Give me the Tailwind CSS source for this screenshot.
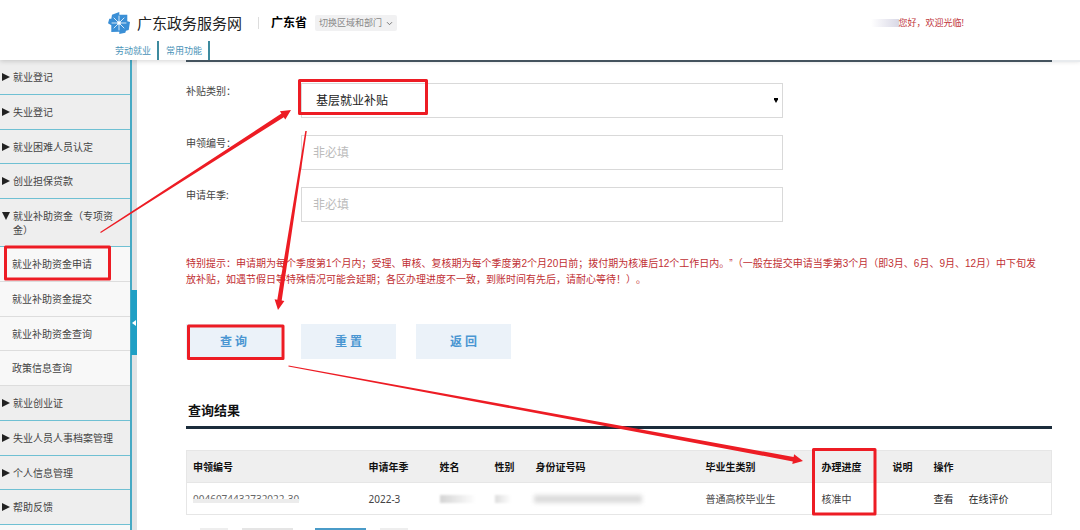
<!DOCTYPE html>
<html lang="zh-CN">
<head>
<meta charset="utf-8">
<meta name="viewport" content="width=device-width, initial-scale=1">
<title>广东政务服务网</title>
<script src="https://cdn.jsdelivr.net/npm/@tailwindcss/browser@4"></script>
</head>
<body class="relative flex h-screen flex-col overflow-hidden bg-white font-['Noto_Sans','Noto_Sans_CJK_SC',sans-serif] text-[10px] leading-4 text-[#444]">

<header class="relative z-10 flex h-[60px] shrink-0 flex-col justify-between bg-white pr-[116px] pl-[108px] shadow-[0_1px_5px_rgba(0,0,0,0.18)]">
  <div class="flex items-center pt-3">
    <svg class="size-[22px]" viewBox="0 0 22 22" aria-hidden="true">
      <path fill="#3a8fd6" d="M4 2.700L11.300 0V2.700H19.300V9.300L22 10L20.700 18L18 18.700L17.300 20.700L11.300 22V19.700L3.300 20V13.300L0 11.300L1.300 6.700H3.300z"/>
      <path stroke="#fff" stroke-width="0.8" stroke-linecap="round" d="M11 11V4M11 11V18M11 11H4M11 11H18M11 11L6 6M11 11L16 6M11 11L6 16M11 11L16 16"/>
      <circle cx="11" cy="11" r="1.800" fill="#fff"/>
    </svg>
    <span class="ml-[7px] text-[15px] leading-[22px] text-[#222]">广东政务服务网</span>
    <span class="ml-4 h-3 w-px bg-[#ddd]"></span>
    <strong class="ml-3 text-[12px] font-bold text-black">广东省</strong>
    <button type="button" class="ml-2 flex h-4 items-center gap-1 rounded-xs bg-[#f1f1f2] px-1 text-[9px] text-[#888]">切换区域和部门
      <svg class="size-[7px]" viewBox="0 0 7 7" fill="none" stroke="#777" aria-hidden="true"><path d="M1 2.200L3.500 4.700L6 2.200"/></svg>
    </button>
    <p class="ml-auto flex items-center text-[9px] text-[#c0353b]"><span class="h-2 w-7 bg-linear-to-r from-white to-[#d9d8e6]"></span>您好，欢迎光临!</p>
  </div>
  <nav class="flex h-[19px] text-[9px] text-[#4a93b8]">
    <a href="#" class="border-r-2 border-[#3d8a9e] pr-1.5 pl-[7px] leading-[19px]">劳动就业</a>
    <a href="#" class="border-r-2 border-[#3d8a9e] pr-1.5 pl-[7px] leading-[19px]">常用功能</a>
  </nav>
</header>

<div class="flex min-h-0 flex-1">
  <aside class="flex shrink-0">
    <ul class="w-[132px] border-r-2 border-[#45a9c4] bg-[#f8f8f8]">
      <li class="flex h-[35px] items-center border-b border-[#6fc0d3] bg-[#eee] pl-0.5"><a href="#" class="flex items-center gap-[3px]"><svg class="size-2" viewBox="0 0 8 8" fill="#222" aria-hidden="true"><path d="M0 0L8 4L0 8z"/></svg>就业登记</a></li>
      <li class="flex h-[35px] items-center border-b border-[#6fc0d3] bg-[#eee] pl-0.5"><a href="#" class="flex items-center gap-[3px]"><svg class="size-2" viewBox="0 0 8 8" fill="#222" aria-hidden="true"><path d="M0 0L8 4L0 8z"/></svg>失业登记</a></li>
      <li class="flex h-[34px] items-center border-b border-[#6fc0d3] bg-[#eee] pl-0.5"><a href="#" class="flex items-center gap-[3px]"><svg class="size-2" viewBox="0 0 8 8" fill="#222" aria-hidden="true"><path d="M0 0L8 4L0 8z"/></svg>就业困难人员认定</a></li>
      <li class="flex h-[35px] items-center border-b border-[#6fc0d3] bg-[#eee] pl-0.5"><a href="#" class="flex items-center gap-[3px]"><svg class="size-2" viewBox="0 0 8 8" fill="#222" aria-hidden="true"><path d="M0 0L8 4L0 8z"/></svg>创业担保贷款</a></li>
      <li>
        <a href="#" class="flex h-12 gap-[3px] border-b border-[#6fc0d3] bg-[#eee] pt-2.5 pr-3 pl-0.5 leading-[14px]"><svg class="mt-[3px] size-2 shrink-0" viewBox="0 0 8 8" fill="#222" aria-hidden="true"><path d="M0 0H8L4 8z"/></svg><span>就业补助资金（专项资金）</span></a>
        <ul>
          <li class="flex h-[35px] items-center border-b border-[#ddd] pl-3"><a href="#">就业补助资金申请</a></li>
          <li class="flex h-[35px] items-center border-b border-[#ddd] pl-3"><a href="#">就业补助资金提交</a></li>
          <li class="flex h-[34px] items-center border-b border-[#ddd] pl-3"><a href="#">就业补助资金查询</a></li>
          <li class="flex h-[35px] items-center border-b border-[#ddd] pl-3"><a href="#">政策信息查询</a></li>
        </ul>
      </li>
      <li class="flex h-[35px] items-center border-b border-[#6fc0d3] bg-[#eee] pl-0.5"><a href="#" class="flex items-center gap-[3px]"><svg class="size-2" viewBox="0 0 8 8" fill="#222" aria-hidden="true"><path d="M0 0L8 4L0 8z"/></svg>就业创业证</a></li>
      <li class="flex h-[35px] items-center border-b border-[#6fc0d3] bg-[#eee] pl-0.5"><a href="#" class="flex items-center gap-[3px]"><svg class="size-2" viewBox="0 0 8 8" fill="#222" aria-hidden="true"><path d="M0 0L8 4L0 8z"/></svg>失业人员人事档案管理</a></li>
      <li class="flex h-[34px] items-center border-b border-[#6fc0d3] bg-[#eee] pl-0.5"><a href="#" class="flex items-center gap-[3px]"><svg class="size-2" viewBox="0 0 8 8" fill="#222" aria-hidden="true"><path d="M0 0L8 4L0 8z"/></svg>个人信息管理</a></li>
      <li class="flex h-[35px] items-center border-b border-[#6fc0d3] bg-[#eee] pl-0.5"><a href="#" class="flex items-center gap-[3px]"><svg class="size-2" viewBox="0 0 8 8" fill="#222" aria-hidden="true"><path d="M0 0L8 4L0 8z"/></svg>帮助反馈</a></li>
    </ul>
    <div class="flex w-[5px] flex-col bg-[#e2e3e5] pt-[230px]">
      <button type="button" aria-label="收起菜单" class="-ml-px flex h-[65px] w-1.5 items-center justify-center bg-[#1f9fc4]"><svg class="h-1.5 w-1" viewBox="0 0 4 6" fill="#fff" aria-hidden="true"><path d="M4 0V6L0 3z"/></svg></button>
    </div>
  </aside>

  <main class="relative z-20 min-w-0 flex-1 pr-7 pl-[49px]">
    <div class="-mr-7 flex h-0.5 bg-[#e8ebee]"><div class="mr-7 flex-1 bg-[#44535e]"></div></div>
    <form class="pt-[21px]">
      <div class="flex flex-col gap-[17px]">
        <div class="flex">
          <label for="type" class="w-[115px] shrink-0">补贴类别：</label>
          <div class="relative w-[482px]">
            <select id="type" class="h-[35px] w-full appearance-none border border-[#d9d9d9] bg-white pl-3.5 text-[12px] text-[#222]"><option>基层就业补贴</option></select>
            <svg class="pointer-events-none absolute top-[15px] right-[5px] h-[5px] w-1" viewBox="0 0 4 5" fill="#000" aria-hidden="true"><path d="M0 0H4V1.500L2 5L0 1.500z"/></svg>
          </div>
        </div>
        <div class="flex">
          <label for="number" class="w-[115px] shrink-0">申领编号：</label>
          <input id="number" type="text" placeholder="非必填" class="h-[35px] w-[482px] border border-[#d9d9d9] px-[11px] text-[12px] placeholder:text-[#bbb]">
        </div>
        <div class="flex">
          <label for="season" class="w-[115px] shrink-0">申请年季:</label>
          <input id="season" type="text" placeholder="非必填" class="h-[35px] w-[482px] border border-[#d9d9d9] px-[11px] text-[12px] placeholder:text-[#bbb]">
        </div>
      </div>
      <p class="mt-[34px] font-['Liberation_Sans','Noto_Sans_CJK_SC',sans-serif] text-[#bf2f33] [text-spacing-trim:space-all]">特别提示：申请期为每个季度第1个月内；受理、审核、复核期为每个季度第2个月20日前；拨付期为核准后12个工作日内。”（一般在提交申请当季第3个月（即3月、6月、9月、12月）中下旬发<br>放补贴，如遇节假日等特殊情况可能会延期；各区办理进度不一致，到账时间有先后，请耐心等待！）。</p>
      <div class="mt-9 flex gap-5 text-[12px] font-bold text-[#4a96d2]">
        <button type="button" class="h-[35px] w-[95px] bg-[#ebf2f9]">查 询</button>
        <button type="reset" class="h-[35px] w-[95px] bg-[#ebf2f9]">重 置</button>
        <button type="button" class="h-[35px] w-[95px] bg-[#ebf2f9]">返 回</button>
      </div>
    </form>

    <h2 class="mt-[41px] border-b-3 border-[#1b2c3b] pb-1.5 pl-0.5 text-[13px] leading-5 font-bold text-[#111]">查询结果</h2>
    <table class="mt-[21px] w-full table-fixed border-collapse border border-[#e6e6e6] text-left">
      <colgroup><col class="w-[176px]"><col class="w-[71px]"><col class="w-[55px]"><col class="w-[41px]"><col class="w-[170px]"><col class="w-[116px]"><col class="w-[71px]"><col class="w-[41px]"><col></colgroup>
      <thead class="bg-[#efefef] text-[#111]">
        <tr class="h-8 border-b border-[#e6e6e6]">
          <th class="pl-1.5">申领编号</th><th class="pl-1.5">申请年季</th><th class="pl-1.5">姓名</th><th class="pl-1.5">性别</th><th class="pl-1.5">身份证号码</th><th class="pl-1.5">毕业生类别</th><th class="pl-1.5">办理进度</th><th class="pl-1.5">说明</th><th class="pl-1.5">操作</th>
        </tr>
      </thead>
      <tbody>
        <tr class="h-8">
          <td class="pl-1.5"><span class="relative inline-block text-[#666]">0046074432732022-30<span class="absolute inset-x-0 top-2 h-1 bg-[#ececec]"></span></span></td>
          <td class="pl-1.5">2022-3</td>
          <td class="pl-1.5"><span class="block h-2 w-9 bg-linear-to-r from-[#d4d4d4] to-white blur-[1px]"></span></td>
          <td class="pl-1.5"><span class="block h-2 w-4 bg-linear-to-r from-[#ddd] to-white blur-[1px]"></span></td>
          <td class="pl-1"><span class="block h-2 w-[108px] bg-[#dcdcdc] blur-[2px]"></span></td>
          <td class="pl-1.5">普通高校毕业生</td>
          <td class="pl-1.5">核准中</td>
          <td></td>
          <td class="pl-1.5"><a href="#" class="mr-[15px] text-[#222]">查看</a><a href="#" class="text-[#222]">在线评价</a></td>
        </tr>
      </tbody>
    </table>
    <nav aria-label="分页" class="mt-[13px] flex pl-3.5">
      <button type="button" aria-label="上一页" class="h-6 w-7 bg-[#eee]"></button>
      <button type="button" aria-label="首页" class="ml-3.5 h-6 w-[51px] bg-[#e5e5e5]"></button>
      <button type="button" aria-label="当前页" class="ml-[22px] h-6 w-[51px] bg-[#4a9bc8]"></button>
      <button type="button" aria-label="下一页" class="ml-3.5 h-6 w-7 bg-[#eee]"></button>
    </nav>
  </main>
</div>

<!-- Step markers and arrows drawn over the page -->
<svg class="pointer-events-none absolute top-0 left-0 z-30 h-[530px] w-[1080px]" viewBox="0 0 1080 530" fill="none" aria-hidden="true">
  <g stroke="#ed1c24" stroke-width="3" stroke-linejoin="round">
    <rect x="299.500" y="80.500" width="127" height="33"/>
    <rect x="5.500" y="247" width="104" height="32"/>
    <rect x="188.500" y="326" width="94.500" height="32.500"/>
    <rect x="813.500" y="449.500" width="61.500" height="64.500"/>
  </g>
  <g fill="#ed1c24">
    <path d="M100.200 232L281.400 113.600L279.900 111.200L291 110L285.300 119.600L283.800 117.200L100.800 233z"/>
    <path d="M305.300 131L277.300 299.700L274.600 299.300L278 310L284.400 300.900L281.700 300.400L306.800 131z"/>
    <path d="M288.600 365.400L793.600 457L794.100 454.300L803 461L792.300 464.100L792.800 461.400L288.400 366.600z"/>
  </g>
</svg>
</body>
</html>
